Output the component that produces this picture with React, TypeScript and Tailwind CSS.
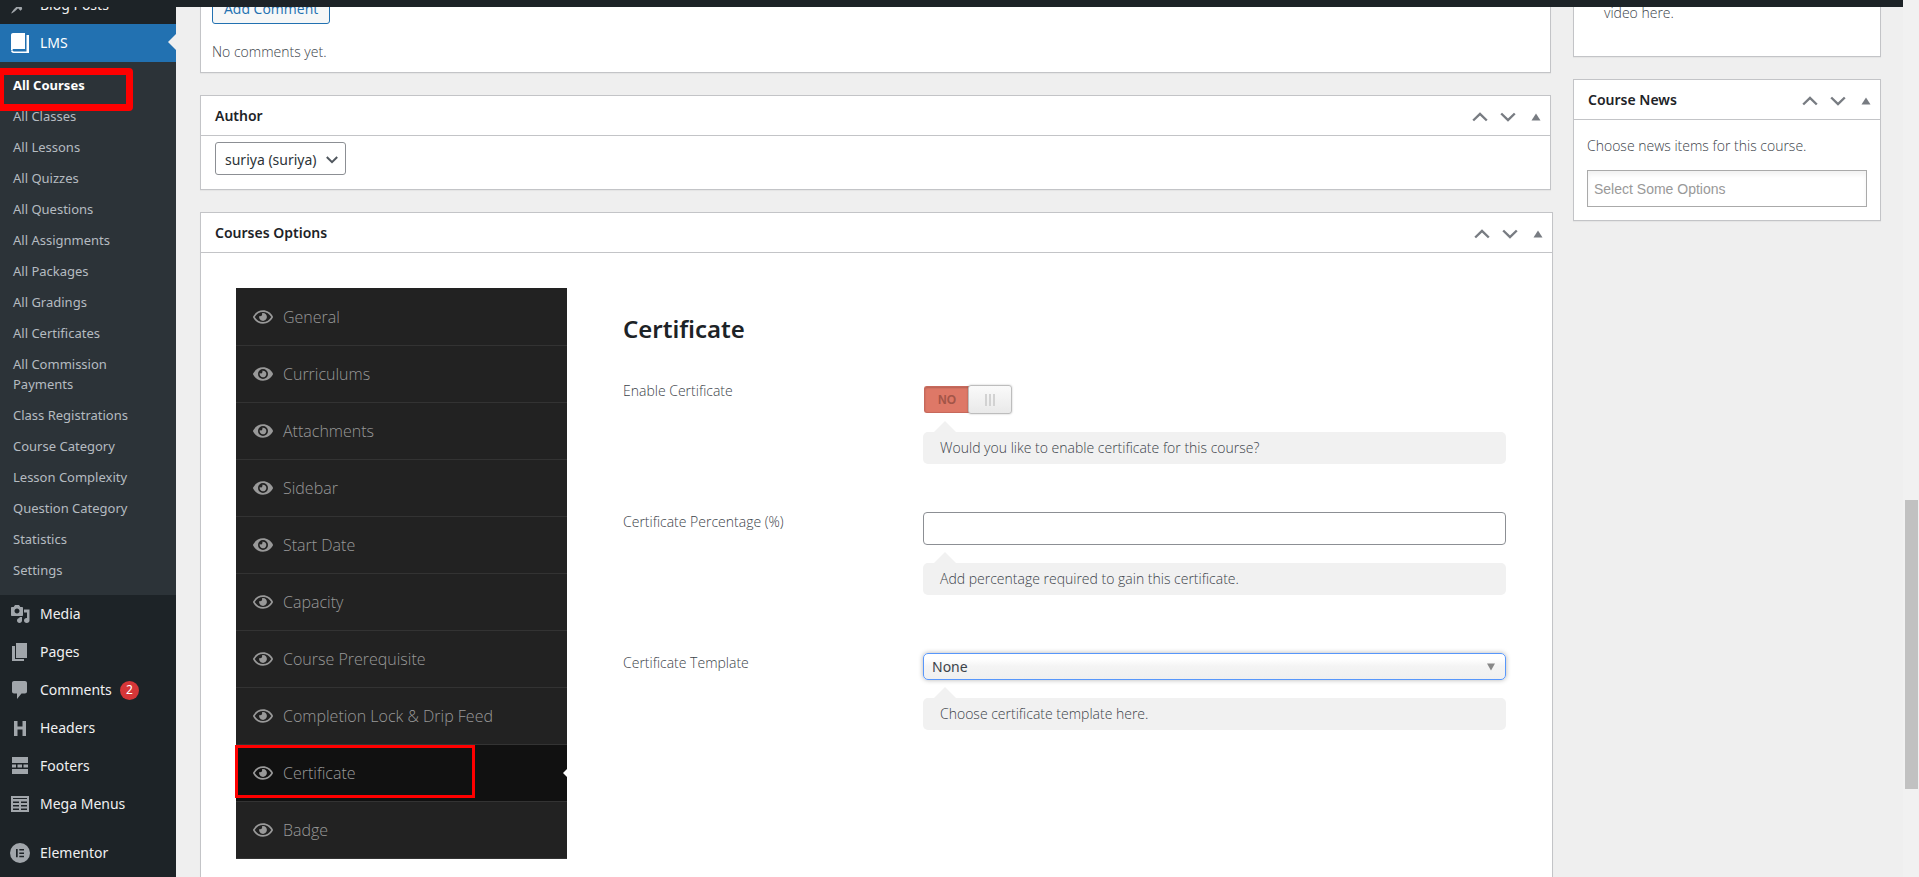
import React from 'react';
import { FaEye, FaRegEye } from 'react-icons/fa';

const submenu = [
  'All Courses',
  'All Classes',
  'All Lessons',
  'All Quizzes',
  'All Questions',
  'All Assignments',
  'All Packages',
  'All Gradings',
  'All Certificates',
  'All Commission Payments',
  'Class Registrations',
  'Course Category',
  'Lesson Complexity',
  'Question Category',
  'Statistics',
  'Settings',
];

const tabs = [
  { label: 'General', solid: false },
  { label: 'Curriculums', solid: true },
  { label: 'Attachments', solid: true },
  { label: 'Sidebar', solid: true },
  { label: 'Start Date', solid: true },
  { label: 'Capacity', solid: false },
  { label: 'Course Prerequisite', solid: false },
  { label: 'Completion Lock & Drip Feed', solid: false },
  { label: 'Certificate', solid: false },
  { label: 'Badge', solid: false },
];

function Icon({ children, className = 'text-[#a1a6ab]' }: { children: React.ReactNode; className?: string }) {
  return (
    <svg viewBox="0 0 20 20" className={`size-5 shrink-0 fill-current ${className}`} aria-hidden="true">
      {children}
    </svg>
  );
}

const PostIcon = (
  <Icon>
    <path d="M10.44 3.02l1.82-1.82 6.36 6.35-1.83 1.82c-1.05-.68-2.48-.57-3.41.36l-.75.75c-.92.93-1.04 2.35-.35 3.41l-1.83 1.82-2.41-2.41-2.8 2.79c-.42.42-3.38 2.71-3.8 2.29s1.86-3.39 2.28-3.81l2.79-2.79L4.1 9.36l1.83-1.82c1.05.69 2.48.57 3.4-.36l.75-.75c.93-.92 1.05-2.35.36-3.41z" />
  </Icon>
);

const BookIcon = (
  <Icon className="text-white">
    <path d="M3 0h12v16H3.6C2.9 16 2.5 16.5 2.5 17H1V2c0-1.100.9-2 2-2z" />
    <path d="M16.500 2H19v18H3.500C2.100 20 1 19 1 17.500h2c0 .6.400 1 1 1h12.500z" />
  </Icon>
);

const MediaIcon = (
  <Icon>
    <path
      fillRule="evenodd"
      d="M13 11V4c0-.55-.45-1-1-1h-1.670L9 1H5L3.670 3H2c-.55 0-1 .45-1 1v7c0 .55.450 1 1 1h10c.55 0 1-.45 1-1zM7 4.500c1.380 0 2.500 1.120 2.500 2.500S8.380 9.500 7 9.500 4.500 8.380 4.500 7 5.620 4.500 7 4.500zM14 5.500h5.500v11c0 1.380-1.120 2.500-2.750 2.500S14 17.880 14 16.500s1.120-2.500 2.500-2.500c.17 0 .34.020.5.050V8.500h-3zM9.500 13H12v3.500c0 1.380-1.120 2.500-2.500 2.500S7 17.880 7 16.500 8.120 14 9.500 14z"
    />
  </Icon>
);

const PagesIcon = (
  <Icon>
    <path d="M6 1h11v15H6zM5 4v13h9v2H2V4z" />
  </Icon>
);

const CommentsIcon = (
  <Icon>
    <path d="M4 1h11c1.100 0 2 .9 2 2v8.500c0 1.100-.9 2-2 2h-3.500L7 19v-5.500H4c-1.100 0-2-.9-2-2V3c0-1.100.9-2 2-2z" />
  </Icon>
);

const HeadingIcon = (
  <Icon>
    <path d="M4 3h3.500v5.500h5V3H16v15h-3.500v-6.500h-5V18H4z" />
  </Icon>
);

const FootersIcon = (
  <Icon>
    <path d="M2 1h16v6H2zM2 8.500h4v3H2zM7.500 8.500h4.500v3H7.500zM13.500 8.500H18v3h-4.500zM2 13h16v5H2z" />
  </Icon>
);

const TableIcon = (
  <Icon>
    <path
      fillRule="evenodd"
      d="M1 2h18v16H1zM3 4v1h14V4zM3 7.500v1.500h6V7.500zM11 7.500v1.500h6V7.500zM3 11v1.500h6V11zM11 11v1.500h6V11zM3 14.500v1.500h6v-1.500zM11 14.500v1.500h6v-1.500z"
    />
  </Icon>
);

const ElementorIcon = (
  <Icon>
    <path
      fillRule="evenodd"
      d="M10 0a10 10 0 1 0 0 20 10 10 0 0 0 0-20zM6 6h1.700v8.300H6zM9.300 6H14v1.600H9.300zM9.300 9.400H14V11H9.300zM9.300 12.700H14v1.600H9.300z"
    />
  </Icon>
);

function MenuRow({ icon, label, badge }: { icon: React.ReactNode; label: string; badge?: string }) {
  return (
    <a href="#" className="flex h-[38px] items-center gap-2.5 px-2.5 text-[14px] leading-5 text-[#f0f0f1]">
      {icon}
      <span>{label}</span>
      {badge && (
        <span className="-ml-0.5 flex size-[19px] items-center justify-center rounded-full bg-[#d63638] text-[12px] leading-4 text-white">
          {badge}
        </span>
      )}
    </a>
  );
}

function Sidebar() {
  return (
    <nav className="w-44 shrink-0 bg-[#1d2327]" aria-label="Main menu">
      <div className="-mt-[21px]">
        <MenuRow icon={PostIcon} label="Blog Posts" />
      </div>
      <a href="#" className="relative flex h-[38px] items-center gap-2.5 bg-[#2271b1] px-2.5 text-[14px] leading-5 text-white">
        {BookIcon}
        <span>LMS</span>
        <span className="absolute right-0 top-[10px] border-y-8 border-r-8 border-y-transparent border-r-[#efefef]" />
      </a>
      <div className="relative bg-[#2c3338] pb-[15px] pl-[13px] pr-8 pt-[13px]">
        <ul className="flex flex-col gap-[11px] text-[13px] leading-5 text-[#b5bbc0]">
          {submenu.map((item, i) => (
            <li key={item}>
              <a href="#" className={i === 0 ? 'block font-bold text-white' : 'block'}>
                {item}
              </a>
            </li>
          ))}
        </ul>
        <span className="pointer-events-none absolute -left-[3px] top-[6px] h-[43px] w-[136px] rounded-[4px] border-[7px] border-[#ff0000]" />
      </div>
      <MenuRow icon={MediaIcon} label="Media" />
      <MenuRow icon={PagesIcon} label="Pages" />
      <MenuRow icon={CommentsIcon} label="Comments" badge="2" />
      <MenuRow icon={HeadingIcon} label="Headers" />
      <MenuRow icon={FootersIcon} label="Footers" />
      <MenuRow icon={TableIcon} label="Mega Menus" />
      <div className="pt-[11px]">
        <MenuRow icon={ElementorIcon} label="Elementor" />
      </div>
    </nav>
  );
}

function PanelHeader({ title }: { title: string }) {
  return (
    <header className="flex h-10 items-center justify-between border-b border-[#c3c4c7] pl-[14px]">
      <h2 className="text-[14px] font-semibold leading-5 text-[#1d2327]">{title}</h2>
      <div className="flex pt-0.5 text-[#787c82]">
        <button type="button" aria-label={`Move ${title} up`} className="flex h-9 w-7 items-center justify-center">
          <svg viewBox="0 0 16 10" className="h-[10px] w-4 fill-none stroke-current stroke-[2.4]">
            <path d="M1.200 8.500 8 2l6.800 6.500" />
          </svg>
        </button>
        <button type="button" aria-label={`Move ${title} down`} className="flex h-9 w-7 items-center justify-center">
          <svg viewBox="0 0 16 10" className="h-[10px] w-4 fill-none stroke-current stroke-[2.4]">
            <path d="M1.200 1.500 8 8l6.800-6.500" />
          </svg>
        </button>
        <button type="button" aria-label={`Toggle ${title}`} className="flex h-9 w-7 items-center justify-center">
          <svg viewBox="0 0 10 8" className="h-2 w-[10px] fill-current">
            <path d="M5 .5 9.500 7.500h-9z" />
          </svg>
        </button>
      </div>
    </header>
  );
}

function Hint({ children }: { children: React.ReactNode }) {
  return (
    <p className="relative mt-[18px] rounded-[5px] bg-[#f1f1f1] px-[17px] py-1.5">
      <span className="absolute -top-[11px] left-[11px] border-x-[11px] border-b-[11px] border-x-transparent border-b-[#f1f1f1]" />
      {children}
    </p>
  );
}

function CertificateForm() {
  return (
    <form className="ml-14 min-w-0 flex-1 pr-[11px] pt-[25px]">
      <h3 className="font-['Noto_Sans',sans-serif] text-[24px] font-semibold leading-8 text-[#1d2327]">Certificate</h3>

      <div className="mt-9 grid grid-cols-[300px_1fr]">
        <label htmlFor="enable">Enable Certificate</label>
        <div>
          <label className="mt-1 flex h-[29px] w-[89px] cursor-pointer items-center">
            <input id="enable" type="checkbox" role="switch" className="sr-only" />
            <span className="ml-px flex h-[27px] w-[45px] items-center justify-center rounded-l-[3px] border border-r-0 border-[#c7685b] bg-[#de7867] font-['Liberation_Sans',sans-serif] text-[12px] font-bold leading-4 text-[#a35548] shadow-[inset_0_1px_2px_rgba(0,0,0,0.2)]">
              NO
            </span>
            <span className="-ml-px flex h-[29px] w-11 items-center justify-center gap-[2px] rounded-[3px] border border-[#bdbdbd] bg-linear-to-b from-[#fafafa] to-[#e9e9e9] shadow-[0_0_2px_rgba(0,0,0,0.25)]">
              <span className="h-3 w-[2px] bg-[#d2d2d2]" />
              <span className="h-3 w-[2px] bg-[#d2d2d2]" />
              <span className="h-3 w-[2px] bg-[#d2d2d2]" />
            </span>
          </label>
          <Hint>Would you like to enable certificate for this course?</Hint>
        </div>
      </div>

      <div className="mt-12 grid grid-cols-[300px_1fr]">
        <label htmlFor="percentage">Certificate Percentage (%)</label>
        <div>
          <input id="percentage" type="text" className="block h-[33px] w-full rounded-[4px] border border-[#8c8f94] bg-white px-2" />
          <Hint>Add percentage required to gain this certificate.</Hint>
        </div>
      </div>

      <div className="mt-[58px] grid grid-cols-[300px_1fr]">
        <label htmlFor="template">Certificate Template</label>
        <div>
          <div className="relative">
            <select
              id="template"
              className="block h-[27px] w-full appearance-none rounded-[5px] border border-[#5897fb] bg-linear-to-b from-white from-20% via-[#f4f4f4] via-50% to-[#f0f0f0] pl-2 pr-8 font-['Noto_Sans',sans-serif] font-normal leading-5 shadow-[0_0_5px_rgba(0,0,0,0.3)]"
            >
              <option>None</option>
            </select>
            <svg viewBox="0 0 8 8" className="pointer-events-none absolute right-[11px] top-[10px] size-2 fill-[#888888]">
              <path d="M0 .5h8L4 7.500z" />
            </svg>
          </div>
          <Hint>Choose certificate template here.</Hint>
        </div>
      </div>
    </form>
  );
}

const panel = 'border border-[#c3c4c7] bg-white shadow-[0_1px_1px_rgba(0,0,0,0.04)]';
const copy = "font-['Open_Sans',sans-serif] text-[14px] font-[350] leading-5 text-[#3c434a]";

export default function App() {
  return (
    <div className="flex h-screen overflow-hidden bg-[#efefef] font-['Noto_Sans',sans-serif] text-[14px] leading-5 text-[#3c434a]">
      <div className="flex min-w-0 flex-1 flex-col">
        <div className="h-[7px] shrink-0 bg-[#1d2327]" />
        <div className="flex min-h-0 flex-1 overflow-hidden">
          <Sidebar />
          <main className="flex min-w-0 flex-1 items-start gap-[22px] pl-6 pr-[22px]">
            <div className="flex min-w-0 flex-1 flex-col gap-[22px]">
              <section className={`${panel} ${copy} -mt-[13px] border-t-0 px-[11px] pb-[10px]`}>
                <button
                  type="button"
                  className="flex h-[30px] items-center rounded-[3px] border border-[#2271b1] bg-[#f6f7f7] px-[11px] font-normal text-[#2271b1]"
                >
                  Add Comment
                </button>
                <p className="mt-[18px]">No comments yet.</p>
              </section>

              <section className={panel}>
                <PanelHeader title="Author" />
                <div className="px-[14px] pb-[14px] pt-[6px]">
                  <div className="relative w-[131px]">
                    <select
                      aria-label="Author"
                      className="block h-[33px] w-full appearance-none rounded-[3px] border border-[#8c8f94] bg-white pl-[9px] pt-0.5 text-[#2c3338]"
                    >
                      <option>suriya (suriya)</option>
                    </select>
                    <svg
                      viewBox="0 0 12 8"
                      className="pointer-events-none absolute right-2 top-[14px] h-2 w-3 fill-none stroke-[#50575e] stroke-2"
                    >
                      <path d="M.8 1 6 6.200 11.200 1" />
                    </svg>
                  </div>
                </div>
              </section>

              <section className={`${panel} -mr-0.5`}>
                <PanelHeader title="Courses Options" />
                <div className={`${copy} flex items-start p-[35px]`}>
                  <ul className="w-[331px] shrink-0 bg-[#222222] pt-px text-[16px] text-[#999999]">
                    {tabs.map(({ label, solid }) => {
                      const active = label === 'Certificate';
                      return (
                        <li key={label} className={`relative border-b border-[#333333] ${active ? 'bg-[#111111]' : ''}`}>
                          <a href="#" className="flex h-14 items-center gap-[10px] pl-[17px]">
                            {solid ? <FaEye className="size-5 shrink-0" /> : <FaRegEye className="size-5 shrink-0" />}
                            <span>{label}</span>
                          </a>
                          {active && (
                            <>
                              <span className="absolute right-0 top-6 border-y-4 border-r-4 border-y-transparent border-r-white" />
                              <span className="pointer-events-none absolute -left-px top-0 h-[53px] w-60 border-[3px] border-[#ff0000]" />
                            </>
                          )}
                        </li>
                      );
                    })}
                  </ul>
                  <CertificateForm />
                </div>
              </section>
            </div>

            <aside className="flex w-[308px] shrink-0 flex-col gap-[22px]">
              <section className={`${panel} ${copy} -mt-1 border-t-0 pb-[33px] pl-[30px]`}>
                <p>video here.</p>
              </section>
              <section className={panel}>
                <PanelHeader title="Course News" />
                <div className={`${copy} px-[13px] pb-[13px] pt-4`}>
                  <label htmlFor="news">Choose news items for this course.</label>
                  <input
                    id="news"
                    type="text"
                    placeholder="Select Some Options"
                    className="mt-[14px] block h-[37px] w-full border border-[#aaaaaa] bg-white px-1.5 font-['Liberation_Sans',sans-serif] font-normal shadow-[inset_0_4px_4px_rgba(0,0,0,0.05)] placeholder:text-[#999999]"
                  />
                </div>
              </section>
            </aside>
          </main>
        </div>
      </div>
      <div className="flex w-4 shrink-0 flex-col bg-[#f1f1f1] pl-[2px] pr-px" aria-hidden="true">
        <div className="grow-[500]" />
        <div className="grow-[289] bg-[#c1c1c1]" />
        <div className="grow-[88]" />
      </div>
    </div>
  );
}
